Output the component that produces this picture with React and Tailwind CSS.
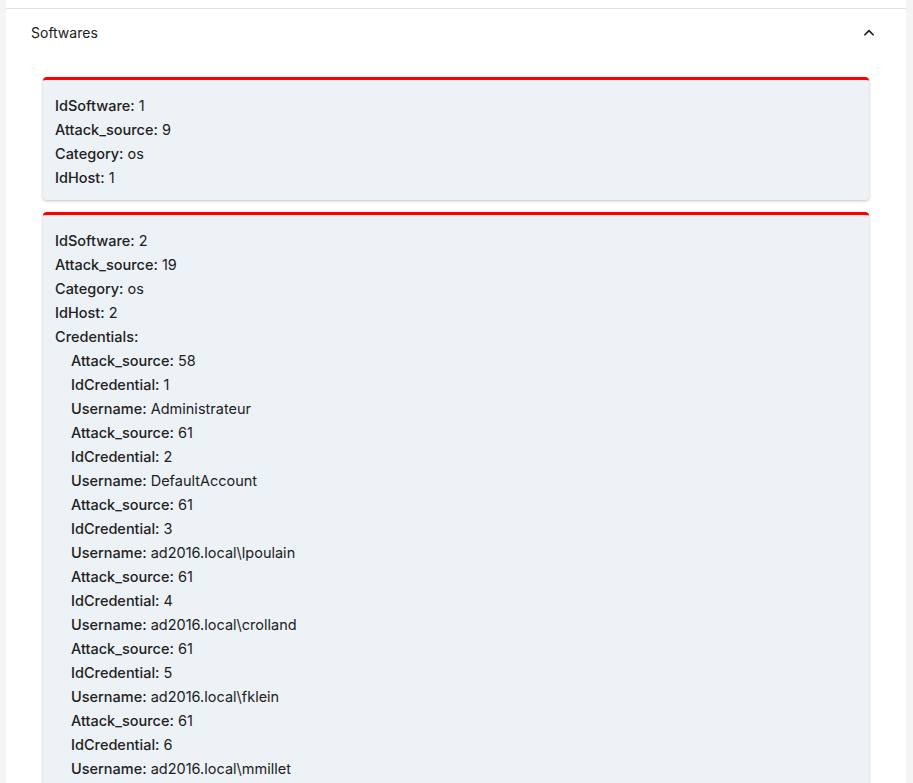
export default function App() {
  const L = ({ k, v, indent }) => (
    <div className={`h-6 leading-6 ${indent ? "pl-4" : ""}`}>
      <span className="font-medium">{k}:</span>{v !== undefined ? " " + v : ""}
    </div>
  );
  const creds = [
    ["58", "1", "Administrateur"],
    ["61", "2", "DefaultAccount"],
    ["61", "3", "ad2016.local\\lpoulain"],
    ["61", "4", "ad2016.local\\crolland"],
    ["61", "5", "ad2016.local\\fklein"],
    ["61", "6", "ad2016.local\\mmillet"],
  ];
  return (
    <div className="h-[783px] overflow-hidden bg-[#f5f5f5] text-[#212121]" style={{ fontFamily: "Inter, 'Noto Sans', sans-serif" }}>
      <div className="ml-[6px] mr-[7px] h-[9px] bg-white border-b border-[#e0e0e0]" />
      <div className="ml-[6px] mr-[7px] bg-white min-h-[800px]">
        <div className="flex items-center justify-between pl-[25px] pr-[30px] h-[47px] text-[14px]">
          <span>Softwares</span>
          <svg width="14" height="14" viewBox="0 0 24 24" fill="none" stroke="#222" strokeWidth="3" strokeLinecap="round" strokeLinejoin="round"><path d="M5 15l7-7 7 7" /></svg>
        </div>
        <div className="pl-[37px] pr-[37px] pt-[21px] flex flex-col gap-3 text-[14.5px]">
          <div className="bg-[#edf2f7] rounded border-t-[3px] border-[#ff0000] shadow-[0_1px_3px_rgba(0,0,0,0.25)] px-3 pt-[14px] pb-[10px]">
            <L k="IdSoftware" v="1" />
            <L k="Attack_source" v="9" />
            <L k="Category" v="os" />
            <L k="IdHost" v="1" />
          </div>
          <div className="bg-[#edf2f7] rounded border-t-[3px] border-[#ff0000] shadow-[0_1px_3px_rgba(0,0,0,0.25)] px-3 pt-[14px] pb-[10px]">
            <L k="IdSoftware" v="2" />
            <L k="Attack_source" v="19" />
            <L k="Category" v="os" />
            <L k="IdHost" v="2" />
            <L k="Credentials" />
            {creds.map(([a, i, u]) => (
              <div key={i}>
                <L indent k="Attack_source" v={a} />
                <L indent k="IdCredential" v={i} />
                <L indent k="Username" v={u} />
              </div>
            ))}
          </div>
        </div>
      </div>
    </div>
  );
}
